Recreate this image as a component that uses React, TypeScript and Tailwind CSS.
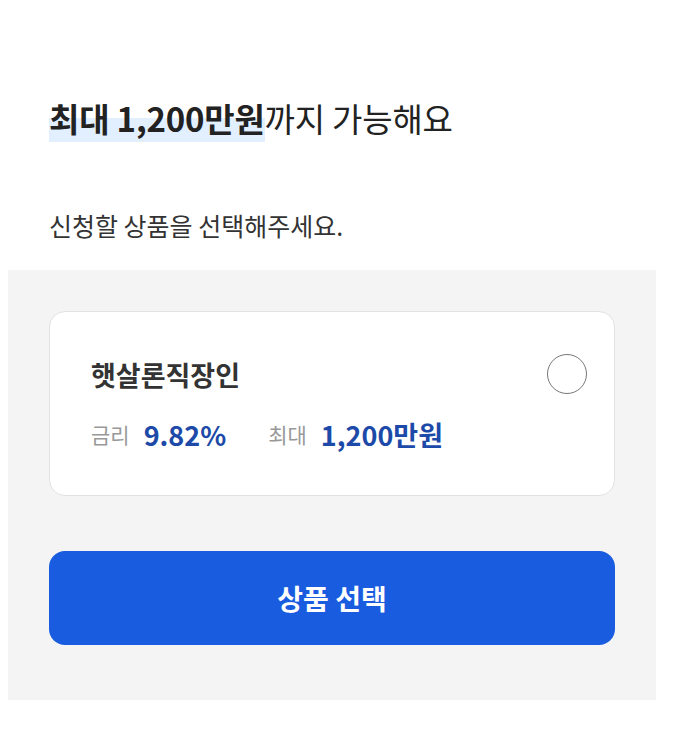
export default function App() {
  return (
    <div className="min-h-[730px] bg-white font-['Noto_Sans_CJK_KR',sans-serif]">
      <div className="px-[49px] pt-[96px]">
        <h1 className="text-[33px] leading-[44px] text-[#222] tracking-[-0.2px]">
          <span className="font-bold bg-[linear-gradient(transparent_50%,#e1efff_50%)]">최대 1,200만원</span>
          <span>까지 가능해요</span>
        </h1>
        <p className="mt-[68px] text-[25px] leading-[34px] text-[#333]">
          신청할 상품을 선택해주세요.
        </p>
      </div>

      <div className="mt-[28px] ml-2 w-[648px] bg-[#f4f4f4] px-[41px] pt-[41px] pb-[55px]">
        <div className="flex items-start justify-between rounded-[16px] border border-[#e2e2e2] bg-white pl-[41px] pr-[27px] pt-[42px] pb-[42px]">
          <div>
            <div className="mt-[3px] text-[27px] leading-[36px] font-semibold text-[#333]">햇살론직장인</div>
            <div className="mt-[24px] flex h-[36px] items-center">
              <span className="text-[21px] text-[#999]">금리</span>
              <span className="ml-[14px] text-[27px] font-bold text-[#1d4aa8]">9.82%</span>
              <span className="ml-[42px] text-[21px] text-[#999]">최대</span>
              <span className="ml-[14px] text-[27px] font-bold text-[#1d4aa8]">1,200만원</span>
            </div>
          </div>
          <div className="h-[40px] w-[40px] rounded-full border border-[#777] bg-white" />
        </div>

        <button className="mt-[55px] flex h-[94px] w-full items-center justify-center rounded-[16px] bg-[#195ce0] text-[28px] font-bold text-white">
          상품 선택
        </button>
      </div>
    </div>
  );
}
